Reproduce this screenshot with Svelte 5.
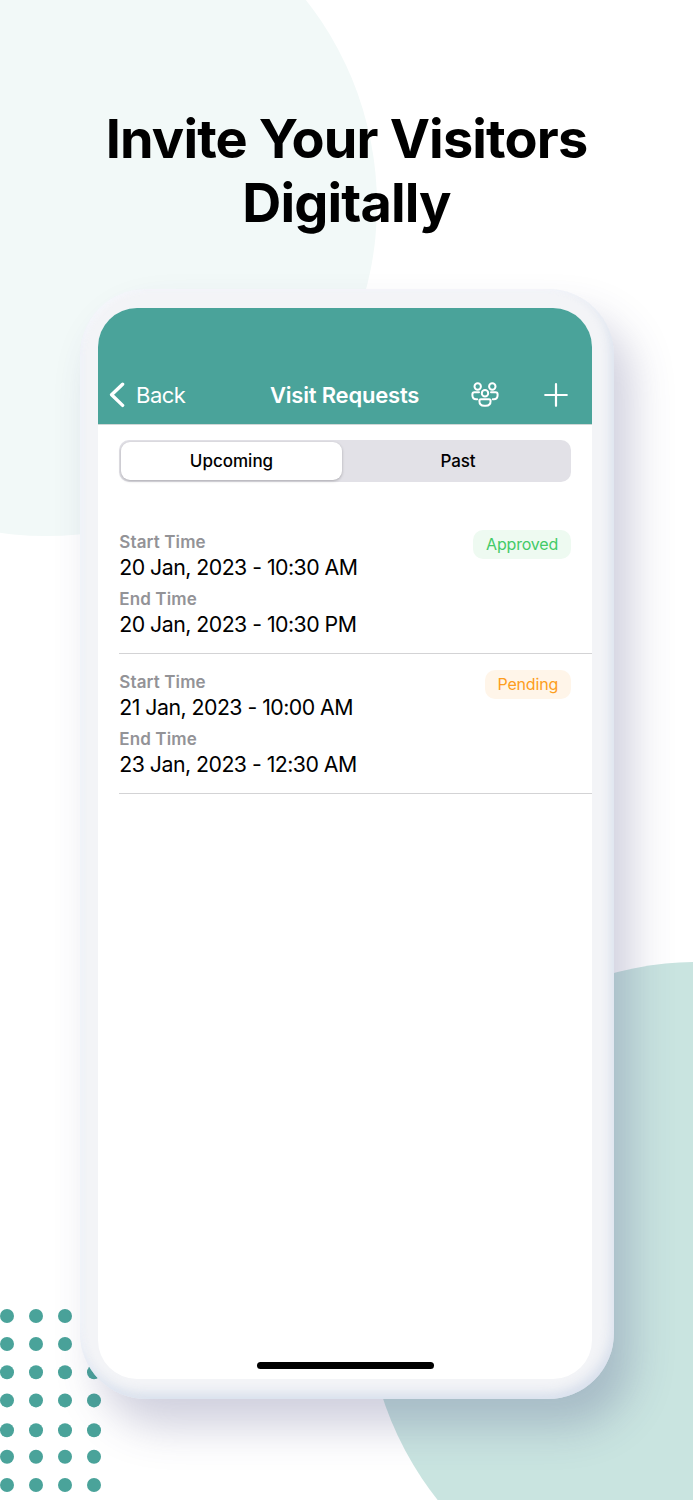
<script>
    const tabs = ["Upcoming", "Past"];
    let active = "Upcoming";

    const visits = [
        {
            start: "20 Jan, 2023 - 10:30 AM",
            end: "20 Jan, 2023 - 10:30 PM",
            status: "Approved",
        },
        {
            start: "21 Jan, 2023 - 10:00 AM",
            end: "23 Jan, 2023 - 12:30 AM",
            status: "Pending",
        },
    ];

    // Centers of the decorative dots
    const dotColumns = [7, 36, 65, 94];
    const dotRows = [16, 44, 72.2, 100.4, 130.3, 156.7, 185];
</script>

<main>
    <div class="circle top" />
    <div class="circle bottom" />
    <svg class="dots" width="110" height="200">
        {#each dotRows as y}
            {#each dotColumns as x}
                <circle cx={x} cy={y} r="7" />
            {/each}
        {/each}
    </svg>

    <h1>Invite Your Visitors<br />Digitally</h1>

    <div class="phone">
        <div class="screen">
            <header>
                <button class="back">
                    <svg width="18" height="28" viewBox="0 0 18 28">
                        <path d="M15.6 3.2L4.6 13.8L15.6 24.4" />
                    </svg>
                    <span>Back</span>
                </button>
                <h2>Visit Requests</h2>
                <button class="people" aria-label="Visitors">
                    <svg width="28" height="26" viewBox="0 0 28 26">
                        <circle cx="6.7" cy="4.5" r="3.2" />
                        <circle cx="21.3" cy="4.5" r="3.2" />
                        <circle cx="14" cy="11.2" r="3.2" />
                        <path d="M8 10.2H3.4Q1.4 10.2 1.4 12.2V13.2Q1.4 17.2 5.2 17.2H6.2" />
                        <path d="M20 10.2H24.6Q26.6 10.2 26.6 12.2V13.2Q26.6 17.2 22.8 17.2H21.8" />
                        <path d="M10 17.3H18Q19.6 17.3 19.6 18.9Q19.6 23.7 14.8 23.7H13.2Q8.4 23.7 8.4 18.9Q8.4 17.3 10 17.3Z" />
                    </svg>
                </button>
                <button class="add" aria-label="Add">
                    <svg width="24" height="24" viewBox="0 0 24 24">
                        <path d="M12 1.2V22.8M1.2 12H22.8" />
                    </svg>
                </button>
            </header>

            <div class="tabs">
                {#each tabs as tab}
                    <button class:active={tab === active} on:click={() => (active = tab)}>
                        {tab}
                    </button>
                {/each}
            </div>

            <ul>
                {#each visits as visit}
                    <li>
                        <dl>
                            <dt>Start Time</dt>
                            <dd>{visit.start}</dd>
                            <dt>End Time</dt>
                            <dd>{visit.end}</dd>
                        </dl>
                        <span class="badge {visit.status.toLowerCase()}">{visit.status}</span>
                    </li>
                {/each}
            </ul>

            <div class="home" />
        </div>
    </div>
</main>

<style>
    :global(body) {
        background: white;
    }

    main {
        position: relative;
        width: 693px;
        height: 1500px;
        overflow: hidden;
        font-family: Inter, "Liberation Sans", sans-serif;
        color: black;
    }

    /* Background shapes, they sit under the phone */
    .circle {
        position: absolute;
        border-radius: 50%;
    }

    .circle.top {
        left: -285px;
        top: -126px;
        width: 662px;
        height: 662px;
        background: #f2f9f8;
    }

    .circle.bottom {
        left: 366px;
        top: 962px;
        width: 664px;
        height: 664px;
        background: #c9e4e0;
    }

    .dots {
        position: absolute;
        left: 0;
        bottom: 0;
        fill: #4aa39a;
    }

    h1 {
        position: relative;
        margin: 0;
        padding-top: 107px;
        font-size: 54px;
        line-height: 64px;
        font-weight: 700;
        letter-spacing: -0.85px;
        text-align: center;
    }

    .phone {
        position: relative;
        box-sizing: border-box;
        width: 533.5px;
        height: 1110px;
        margin: 54px 0 0 80px;
        padding: 19px 21.5px 20px 18px;
        border-radius: 66px;
        background: #f3f4f7;
        box-shadow:
            18px 28px 42px rgba(68, 68, 125, 0.25),
            inset -3px -6px 11px rgba(185, 200, 224, 0.48),
            inset 2px 1px 6px rgba(250, 251, 255, 0.9);
    }

    .screen {
        display: flex;
        flex-direction: column;
        height: 100%;
        overflow: hidden;
        border-radius: 39px;
        background: white;
    }

    button {
        padding: 0;
        border: 0;
        background: none;
        font-family: inherit;
        color: inherit;
    }

    header {
        display: grid;
        grid-template-columns: 120px 1fr 80px 60px;
        align-items: center;
        box-sizing: border-box;
        height: 116.5px;
        padding: 58px 5.5px 0 9px;
        background: #4aa39a;
        border-bottom: 1px solid #d0d7d6;
        color: white;
    }

    header svg {
        display: block;
        fill: none;
        stroke: white;
        stroke-linecap: round;
        stroke-linejoin: round;
    }

    .back {
        display: flex;
        align-items: center;
        gap: 11px;
        font-size: 22px;
        letter-spacing: -0.5px;
    }

    .back svg {
        stroke-width: 3.4;
    }

    h2 {
        margin: 0 0 0 43px;
        font-size: 22px;
        font-weight: 600;
        letter-spacing: -0.2px;
        white-space: nowrap;
    }

    .people svg {
        margin-left: 24.5px;
        stroke-width: 2;
    }

    .add svg {
        margin-left: 17px;
        stroke-width: 2.2;
    }

    .tabs {
        display: grid;
        grid-template-columns: 221px 1fr;
        box-sizing: border-box;
        height: 42px;
        margin: 15.5px 21px 0;
        padding: 2px;
        border-radius: 10px;
        background: #e2e1e7;
    }

    .tabs button {
        padding-left: 5px;
        border-radius: 9px;
        font-size: 17px;
        font-weight: 500;
        letter-spacing: -0.15px;
    }

    .tabs .active {
        padding-left: 0;
        background: white;
        box-shadow: 0 1px 3px rgba(0, 0, 0, 0.25);
        letter-spacing: 0;
    }

    ul {
        margin: 32px 0 0 21.3px;
        padding: 0;
        list-style: none;
    }

    li {
        display: flex;
        justify-content: space-between;
        align-items: flex-start;
        box-sizing: border-box;
        height: 140px;
        padding: 16px 21px 0 0;
        border-bottom: 1px solid #d3d3d5;
    }

    dl {
        margin: 0;
    }

    dt {
        padding-top: 1px;
        font-size: 17px;
        line-height: 23px;
        font-weight: 600;
        letter-spacing: 0.12px;
        color: #939397;
    }

    dd {
        margin: 0 0 6px;
        font-size: 21.3px;
        line-height: 27px;
        letter-spacing: -0.53px;
        white-space: nowrap;
    }

    .badge {
        padding: 0 13px;
        border-radius: 10px;
        font-size: 16px;
        line-height: 29px;
        letter-spacing: -0.2px;
    }

    .approved {
        background: #eefaf1;
        color: #43ca67;
    }

    .pending {
        background: #fff5e9;
        color: #fd9d20;
    }

    /* iOS home indicator */
    .home {
        width: 177px;
        height: 7px;
        margin: auto auto 10px;
        border-radius: 4px;
        background: black;
    }
</style>
